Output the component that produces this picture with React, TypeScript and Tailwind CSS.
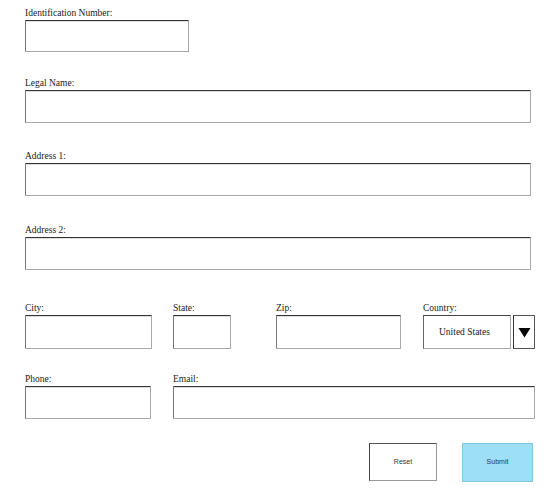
const serif = { fontFamily: '"Liberation Serif", "Times New Roman", serif' };

function Label({ children }: { children: React.ReactNode }) {
  return (
    <div className="h-[13px] text-[9.5px] leading-[12px] text-[#222]" style={serif}>
      {children}
    </div>
  );
}

function Box({ className = "" }: { className?: string }) {
  return (
    <div
      className={`border border-[#a8a8a8] border-t-[#333] border-l-[#777] rounded-[1px] bg-white shadow-[inset_0_1px_0_rgba(0,0,0,0.12)] ${className}`}
    />
  );
}

function Field({ label, className = "", boxClass }: { label: string; className?: string; boxClass: string }) {
  return (
    <div className={className}>
      <Label>{label}</Label>
      <Box className={boxClass} />
    </div>
  );
}

export default function App() {
  return (
    <div className="w-[558px] h-[492px] bg-white pl-[25px] pt-[7px] flex flex-col">
      <Field label="Identification Number:" boxClass="w-[164px] h-[32px]" />
      <Field label="Legal Name:" className="mt-[25px]" boxClass="w-[506px] h-[33px]" />
      <Field label="Address 1:" className="mt-[27px]" boxClass="w-[506px] h-[33px]" />
      <Field label="Address 2:" className="mt-[28px]" boxClass="w-[506px] h-[33px]" />

      <div className="mt-[32px] flex">
        <Field label="City:" boxClass="w-[127px] h-[34px]" />
        <Field label="State:" className="ml-[21px]" boxClass="w-[58px] h-[34px]" />
        <Field label="Zip:" className="ml-[45px]" boxClass="w-[125px] h-[34px]" />
        <div className="ml-[22px]">
          <Label>Country:</Label>
          <div className="flex h-[34px]">
            <div
              className="w-[88px] h-full border border-[#a8a8a8] border-t-[#444] border-l-[#666] flex items-center pl-[15px] text-[9.5px] text-[#222]"
              style={serif}
            >
              United States
            </div>
            <div className="ml-[2px] w-[22px] h-full border border-[#555] border-l-[#333] flex items-center justify-center">
              <svg width="13" height="11" viewBox="0 0 13 11">
                <path d="M0.5 1 L12.5 1 L6.5 10.5 Z" fill="#000" />
              </svg>
            </div>
          </div>
        </div>
      </div>

      <div className="mt-[24px] flex">
        <Field label="Phone:" boxClass="w-[126px] h-[33px]" />
        <Field label="Email:" className="ml-[22px]" boxClass="w-[362px] h-[33px]" />
      </div>

      <div className="mt-[24px] flex pl-[344px] gap-[25px]">
        <button
          type="button"
          className="w-[68px] h-[38px] border border-[#999] border-t-[#555] border-l-[#444] bg-white text-[7px] text-[#333]"
          style={{ fontFamily: '"Liberation Sans", Arial, sans-serif' }}
        >
          Reset
        </button>
        <button
          type="button"
          className="w-[71px] h-[39px] border border-[#7ec8e3] bg-[#9cdff7] text-[7px] text-[#2a3a44]"
          style={{ fontFamily: '"Liberation Sans", Arial, sans-serif' }}
        >
          Submit
        </button>
      </div>
    </div>
  );
}
